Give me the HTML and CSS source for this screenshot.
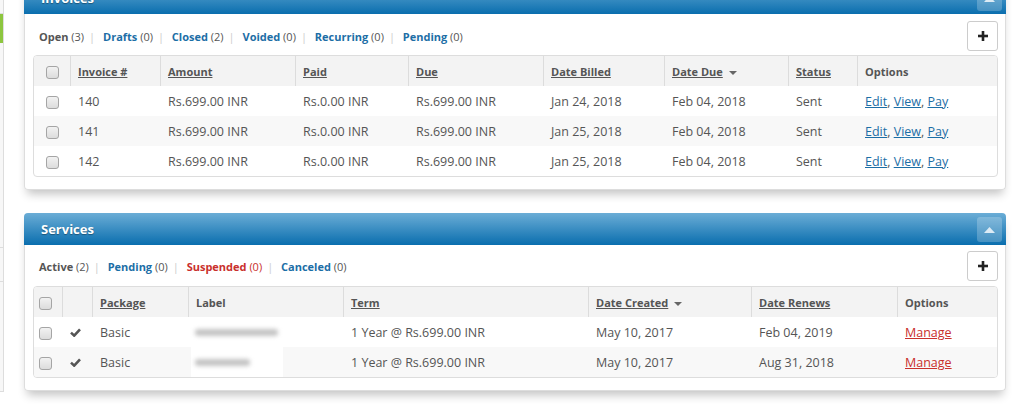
FILE: index.html
```html
<!DOCTYPE html>
<html>
<head>
<meta charset="utf-8">
<title>Invoices and Services</title>
<link rel="stylesheet" href="styles.css">
</head>
<body>
<div class="layout">
  <aside class="sidebar">
    <div class="side-item s1"></div>
    <div class="side-item active"></div>
    <div class="side-item s3"></div>
    <div class="side-item s4"></div>
    <div class="side-item s5"></div>
  </aside>
  <main class="main">
    <section class="panel invoices">
      <header class="panel-head">
        <h2>Invoices</h2>
        <button class="collapse"><svg width="11" height="6" viewBox="0 0 11 6"><polygon points="0,6 5.5,0 11,6" fill="#dcebf5"/></svg></button>
      </header>
      <div class="panel-body">
        <div class="toolbar">
          <nav class="tabs">
            <span class="tab current">Open</span> <span class="count">(3)</span><span class="sep">|</span>
            <a class="tab">Drafts</a> <span class="count">(0)</span><span class="sep">|</span>
            <a class="tab">Closed</a> <span class="count">(2)</span><span class="sep">|</span>
            <a class="tab">Voided</a> <span class="count">(0)</span><span class="sep">|</span>
            <a class="tab">Recurring</a> <span class="count">(0)</span><span class="sep">|</span>
            <a class="tab">Pending</a> <span class="count">(0)</span>
          </nav>
          <button class="add"><svg width="10" height="10" viewBox="0 0 10 10"><rect x="3.7" y="0" width="2.6" height="10" fill="#222"/><rect x="0" y="3.7" width="10" height="2.6" fill="#222"/></svg></button>
        </div>
        <div class="table-wrap">
          <table class="grid">
            <colgroup>
              <col style="width:37px"><col style="width:90px"><col style="width:135px"><col style="width:113px"><col style="width:135px"><col style="width:121px"><col style="width:124px"><col style="width:69px"><col>
            </colgroup>
            <thead>
              <tr>
                <th class="cbcol"><span class="cb"></span></th>
                <th><a class="sort">Invoice #</a></th>
                <th><a class="sort">Amount</a></th>
                <th><a class="sort">Paid</a></th>
                <th><a class="sort">Due</a></th>
                <th><a class="sort">Date Billed</a></th>
                <th><a class="sort">Date Due</a><span class="caret"></span></th>
                <th><a class="sort">Status</a></th>
                <th>Options</th>
              </tr>
            </thead>
            <tbody>
              <tr>
                <td class="cbcol"><span class="cb"></span></td>
                <td>140</td><td>Rs.699.00 INR</td><td>Rs.0.00 INR</td><td>Rs.699.00 INR</td><td>Jan 24, 2018</td><td>Feb 04, 2018</td><td>Sent</td>
                <td><a class="lnk">Edit</a>, <a class="lnk">View</a>, <a class="lnk">Pay</a></td>
              </tr>
              <tr>
                <td class="cbcol"><span class="cb"></span></td>
                <td>141</td><td>Rs.699.00 INR</td><td>Rs.0.00 INR</td><td>Rs.699.00 INR</td><td>Jan 25, 2018</td><td>Feb 04, 2018</td><td>Sent</td>
                <td><a class="lnk">Edit</a>, <a class="lnk">View</a>, <a class="lnk">Pay</a></td>
              </tr>
              <tr>
                <td class="cbcol"><span class="cb"></span></td>
                <td>142</td><td>Rs.699.00 INR</td><td>Rs.0.00 INR</td><td>Rs.699.00 INR</td><td>Jan 25, 2018</td><td>Feb 04, 2018</td><td>Sent</td>
                <td><a class="lnk">Edit</a>, <a class="lnk">View</a>, <a class="lnk">Pay</a></td>
              </tr>
            </tbody>
          </table>
        </div>
      </div>
    </section>

    <section class="panel services">
      <header class="panel-head">
        <h2>Services</h2>
        <button class="collapse"><svg width="11" height="6" viewBox="0 0 11 6"><polygon points="0,6 5.5,0 11,6" fill="#dcebf5"/></svg></button>
      </header>
      <div class="panel-body">
        <div class="toolbar">
          <nav class="tabs">
            <span class="tab current">Active</span> <span class="count">(2)</span><span class="sep">|</span>
            <a class="tab">Pending</a> <span class="count">(0)</span><span class="sep">|</span>
            <a class="tab danger">Suspended</a> <span class="count danger">(0)</span><span class="sep">|</span>
            <a class="tab">Canceled</a> <span class="count">(0)</span>
          </nav>
          <button class="add"><svg width="10" height="10" viewBox="0 0 10 10"><rect x="3.7" y="0" width="2.6" height="10" fill="#222"/><rect x="0" y="3.7" width="10" height="2.6" fill="#222"/></svg></button>
        </div>
        <div class="table-wrap">
          <table class="grid">
            <colgroup>
              <col style="width:29px"><col style="width:30px"><col style="width:96px"><col style="width:155px"><col style="width:245px"><col style="width:163px"><col style="width:146px"><col>
            </colgroup>
            <thead>
              <tr>
                <th class="cbcol left"><span class="cb"></span></th>
                <th></th>
                <th><a class="sort">Package</a></th>
                <th>Label</th>
                <th><a class="sort">Term</a></th>
                <th><a class="sort">Date Created</a><span class="caret"></span></th>
                <th><a class="sort">Date Renews</a></th>
                <th>Options</th>
              </tr>
            </thead>
            <tbody>
              <tr>
                <td class="cbcol left"><span class="cb"></span></td>
                <td class="chk"><svg width="11" height="9" viewBox="0 0 11 9"><path d="M1 4.6 L4.2 7.6 L10 1.4" fill="none" stroke="#555" stroke-width="2.6"/></svg></td>
                <td>Basic</td>
                <td class="label"><div class="redact"><div class="blur" style="width:83px"></div></div></td>
                <td>1 Year @ Rs.699.00 INR</td>
                <td>May 10, 2017</td>
                <td>Feb 04, 2019</td>
                <td><a class="lnk red">Manage</a></td>
              </tr>
              <tr>
                <td class="cbcol left"><span class="cb"></span></td>
                <td class="chk"><svg width="11" height="9" viewBox="0 0 11 9"><path d="M1 4.6 L4.2 7.6 L10 1.4" fill="none" stroke="#555" stroke-width="2.6"/></svg></td>
                <td>Basic</td>
                <td class="label"><div class="redact"><div class="blur" style="width:55px"></div></div></td>
                <td>1 Year @ Rs.699.00 INR</td>
                <td>May 10, 2017</td>
                <td>Aug 31, 2018</td>
                <td><a class="lnk red">Manage</a></td>
              </tr>
            </tbody>
          </table>
        </div>
      </div>
    </section>
  </main>
</div>
</body>
</html>
```

FILE: styles.css
```css
* { box-sizing: border-box; }
html, body { margin: 0; padding: 0; background: #fff; }
body {
  font-family: "Open Sans", "Liberation Sans", sans-serif;
  color: #555;
  height: 412px;
  overflow: hidden;
}
.layout { display: flex; align-items: flex-start; }

/* sidebar edge */
.sidebar {
  width: 4px;
  border-right: 1px solid #ddd;
  background: #f7f7f7;
  display: flex;
  flex-direction: column;
}
.side-item { border-bottom: 1px solid #ddd; }
.s1 { height: 14px; }
.side-item.active { height: 29px; background: #8dc63f; border-bottom: 0; }
.s3 { height: 205px; }
.s4 { height: 34px; }
.s5 { height: 110px; }

.main { margin-left: 20px; width: 982px; }

/* panels */
.panel {
  background: #fff;
  border-radius: 4px;
  box-shadow: 0 7px 10px -3px rgba(0, 0, 0, 0.24);
}
.invoices { margin-top: -18px; }
.services { margin-top: 23px; }

.panel-head {
  height: 32px;
  display: flex;
  align-items: center;
  justify-content: space-between;
  padding: 0 4px 0 17px;
  background: linear-gradient(#6badd6, #0a6eae);
  border-radius: 4px 4px 0 0;
}
.panel-head h2 {
  margin: 0;
  font-size: 13px;
  font-weight: 700;
  color: #fff;
  text-shadow: 0 1px 1px rgba(0, 0, 0, 0.35);
}
.collapse {
  width: 25px;
  height: 25px;
  padding: 0;
  border: 0;
  border-radius: 3px;
  background: rgba(255, 255, 255, 0.22);
  display: flex;
  align-items: center;
  justify-content: center;
  margin-top: 1px;
}

.panel-body {
  border: 1px solid #ddd;
  border-top: 0;
  border-radius: 0 0 4px 4px;
  padding: 7px 7px 12px 8px;
}
.services .panel-body { padding-top: 6px; }

.toolbar {
  display: flex;
  align-items: center;
  justify-content: space-between;
  height: 30px;
  margin-bottom: 4px;
}
.services .toolbar { margin-bottom: 5px; }
.tabs { font-size: 11px; padding-left: 6px; white-space: nowrap; }
.tab { font-weight: 700; color: #1c6ea6; text-decoration: none; }
.tab.current { color: #555; }
.tab.danger, .count.danger { color: #c9302c; }
.count { color: #555; }
.sep { color: #ccc; margin: 0 5px; }

.add {
  width: 31px;
  height: 30px;
  padding: 0;
  border: 1px solid #ccc;
  border-radius: 3px;
  background: #fff;
  display: flex;
  align-items: center;
  justify-content: center;
}

/* tables */
.table-wrap {
  border: 1px solid #ddd;
  border-radius: 4px;
  overflow: hidden;
}
.grid {
  width: 100%;
  table-layout: fixed;
  border-collapse: separate;
  border-spacing: 0;
}
.grid th {
  height: 30px;
  padding: 0 7px;
  text-align: left;
  font-size: 11px;
  font-weight: 700;
  background: #f3f3f3;
  border-right: 1px solid #dcdcdc;
  white-space: nowrap;
}
.grid th:last-child { border-right: 0; }
.grid td {
  height: 30px;
  padding: 0 7px;
  font-size: 12.5px;
  white-space: nowrap;
  vertical-align: middle;
}
.grid tbody tr:nth-child(even) td { background: #f8f8f8; }

.sort { color: #555; text-decoration: underline; }
.caret {
  display: inline-block;
  margin-left: 6px;
  vertical-align: middle;
  border-left: 4px solid transparent;
  border-right: 4px solid transparent;
  border-top: 4px solid #666;
}

.grid .cbcol { text-align: center; padding: 0; }
.grid .cbcol.left { text-align: left; padding-left: 5px; }
.cb {
  display: inline-block;
  width: 13px;
  height: 13px;
  vertical-align: middle;
  border: 1px solid #a5a5a5;
  border-radius: 3px;
  background: linear-gradient(#f2f2f2, #dcdcdc);
}

.grid td.chk { padding: 0 0 0 7px; }
.chk svg { display: block; }

.lnk { color: #1c6ea6; text-decoration: underline; }
.lnk.red { color: #c9302c; }

.grid td.label { padding: 0 0 0 2px; }
.redact {
  width: 92px;
  height: 30px;
  background: #fff;
  display: flex;
  align-items: center;
  padding-left: 4px;
}
.blur {
  height: 7px;
  background: #c4c4c4;
  border-radius: 3px;
  filter: blur(2px);
}
```
